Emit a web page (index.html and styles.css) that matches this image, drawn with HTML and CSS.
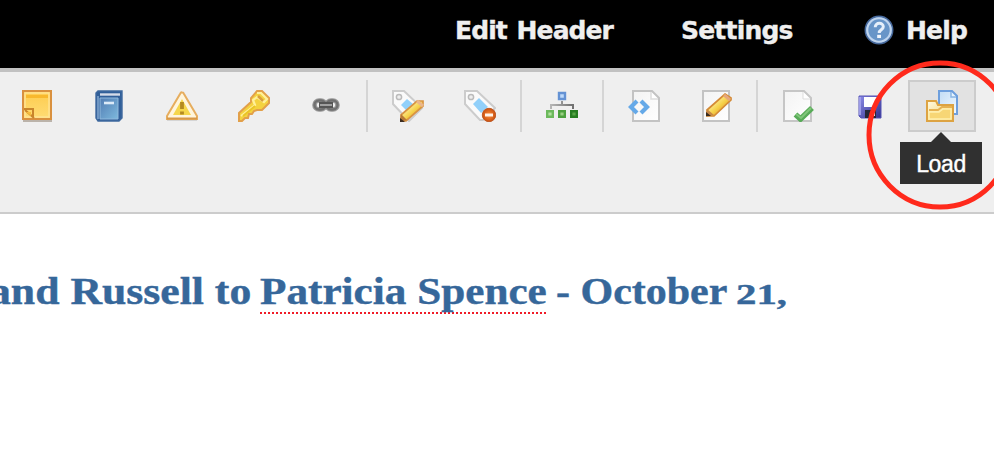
FILE: index.html
```html
<!DOCTYPE html>
<html lang="en">
<head>
<meta charset="utf-8">
<title>Editor</title>
<link rel="stylesheet" href="styles.css">
</head>
<body>
<svg class="defs" width="0" height="0" aria-hidden="true">
  <defs>
    <linearGradient id="gold" x2="0" y2="1"><stop offset="0" stop-color="#fdcb4d"/><stop offset="1" stop-color="#ffdc75"/></linearGradient>
    <linearGradient id="blue" x2="1" y2="1"><stop stop-color="#527cb3"/><stop offset="1" stop-color="#7db9dd"/></linearGradient>
    <linearGradient id="page" x2="1" y2="1"><stop stop-color="#f3f3f3"/><stop offset="1" stop-color="#fff"/></linearGradient>
    <linearGradient id="pencil" x1="0" y1="0" x2="1" y2="1"><stop offset=".25" stop-color="#fff4a5"/><stop offset=".55" stop-color="#f5cf45"/><stop offset=".8" stop-color="#d98a3a"/></linearGradient>
    <linearGradient id="disk" x2="1" y2="1"><stop stop-color="#8c8ce8"/><stop offset="1" stop-color="#302f8c"/></linearGradient>
    <linearGradient id="sheet" x2="1" y2="1"><stop stop-color="#c2dcf5"/><stop offset="1" stop-color="#f2faff"/></linearGradient>
    <linearGradient id="folder" x2="1" y2="1"><stop stop-color="#fffbe5"/><stop offset="1" stop-color="#f3cc58"/></linearGradient>
    <linearGradient id="line" x2="1"><stop stop-color="#b5b5b5"/><stop offset="1" stop-color="#707070"/></linearGradient>
    <radialGradient id="minus"><stop stop-color="#ff8f3d"/><stop offset="1" stop-color="#c9500f"/></radialGradient>
  </defs>
</svg>

<header class="topbar">
  <a class="menu menu-edit">Edit Header</a>
  <a class="menu menu-settings">Settings</a>
  <a class="menu menu-help">
    <svg class="help-icon" viewBox="0 0 28 28"><circle cx="14" cy="14" r="12.7" fill="#6e9bcf" stroke="#47699c" stroke-width="1.6"/><circle cx="14" cy="14" r="11" fill="#6895c8" stroke="#bfd4ee" stroke-width="2"/><path d="M10.5 11.5c0-5 7.5-4.8 7.5-.5 0 3-3.8 2.7-3.8 5.7" fill="none" stroke="#e6effa" stroke-width="2.8"/><rect x="12.3" y="18.5" width="3.6" height="3" fill="#f2f6fc"/></svg>
    <span class="help-label">Help</span>
  </a>
</header>

<nav class="toolbar">
  <button class="tool"><svg viewBox="0 0 32 32"><path d="M1 31h29" stroke="#bbb3aa" stroke-width="2"/><path d="M1 1h28v28H1z" fill="url(#gold)" stroke="#d9903e" stroke-width="2"/><path d="M3 3h24v24H3z" fill="none" stroke="#ffe394" stroke-width="1.4"/><path d="M4 5h22v3H4z" fill="#f8b82d"/><path d="M2 19h9v8M3 20l9 8" fill="none" stroke="#c9852b" stroke-width="2"/><path d="M4 22h5v4z" fill="#f7bd3e"/></svg></button>
  <button class="tool"><svg viewBox="0 0 32 32"><path d="M4 1h24v27l-3 3H4L2 28V3z" fill="#315f99" stroke="#3f699f" stroke-width="1.4"/><path d="M6 4.5h20" stroke="#d5dbe8" stroke-width="2.4"/><path d="M6 8h18v21H6z" fill="url(#blue)" stroke="#91b9dc"/><path d="M4 6v23" stroke="#85a9d1" stroke-width="1.5"/><path d="M10 13h10" stroke="#dceaf8" stroke-width="2.6"/></svg></button>
  <button class="tool"><svg viewBox="0 0 32 32"><path d="M1 30h30" stroke="#ccc" stroke-width="1.5"/><path d="M16 2.5Q17 2 18 4l13 22v3H1v-3L14 4q1-2 2-1.5z" fill="#fff5dc" stroke="#e6ad5e" stroke-width="2"/><path d="M1 28.5h30" stroke="#d89848" stroke-width="2"/><path d="M16 9l9 16H7z" fill="#f5d64b"/><path d="M16 12v7m0 2.5v3" stroke="#b48a22" stroke-width="3.8"/></svg></button>
  <button class="tool"><svg viewBox="0 0 32 32"><path d="M19 1h5l7 7v5l-7 7h-5l-3 1-2 3h-3l-1 4H7l-3 3H1v-8l12-11V8z" fill="#f4d23f" stroke="#e2a04a" stroke-width="2"/><path d="M19 3h4l6 6-3 3-7-5-4 3 2 5L3 26" fill="none" stroke="#fff09b" stroke-width="2.2"/><path d="M20 6l5 5" stroke="#d99f3b" stroke-width="2.5"/><path d="M5 26l12-10" stroke="#eac527" stroke-width="2"/></svg></button>
  <button class="tool"><svg viewBox="0 0 32 32"><g fill="none" stroke="#999" stroke-width="4.6"><rect x="4.5" y="10.5" width="11" height="9" rx="4.5"/><rect x="16.5" y="10.5" width="11" height="9" rx="4.5"/></g><g fill="none" stroke="#707070" stroke-width="2.4"><rect x="4.5" y="10.5" width="11" height="9" rx="4.5"/><rect x="16.5" y="10.5" width="11" height="9" rx="4.5"/></g><path d="M9 15h14" stroke="#555" stroke-width="6"/><path d="M10 15h12" stroke="#aaa" stroke-width="1.8"/></svg></button>
  <span class="sep"></span>
  <button class="tool"><svg viewBox="0 0 32 32"><path d="M1 1h11l18 17-13 13L1 14z" fill="#fafafa" stroke="#ccc" stroke-width="2"/><circle cx="7" cy="7" r="2.6" fill="#eee" stroke="#bbb" stroke-width="1.5"/><path d="M15 9l6 5-7 6-5-5z" fill="#91d0fa"/><path d="M25 11h6v5L14 31H9v-6z" fill="url(#pencil)" stroke="#d89342" stroke-width="1.7"/><path d="M25 11l6 5" stroke="#eab68b" stroke-width="3"/><path d="M9 24l6 6-7 2z" fill="#b87938"/><path d="M8 28v4h5z" fill="#3b2c20"/></svg></button>
  <button class="tool"><svg viewBox="0 0 32 32"><path d="M1 1h12l18 17-12 12h-3L1 14z" fill="#fafafa" stroke="#ccc" stroke-width="2"/><circle cx="7" cy="7" r="2.6" fill="#eee" stroke="#bbb" stroke-width="1.5"/><path d="M15 8l9 9-7 6-8-9z" fill="#91d0fa"/><circle cx="25" cy="25" r="6.7" fill="url(#minus)" stroke="#bd5a27"/><path d="M21 25h8" stroke="#fff3e8" stroke-width="3"/></svg></button>
  <span class="sep"></span>
  <button class="tool"><svg viewBox="0 0 32 32"><path d="M16 11v4M5 19v-4h22v4" fill="none" stroke="url(#line)" stroke-width="2"/><path d="M13 3h6v6h-6z" fill="#bdd9fa" stroke="#6492d4" stroke-width="2.4"/><path d="M1.2 21.2h5.6v5.6H1.2z" fill="#b2e19f" stroke="#6cb95c" stroke-width="2.4"/><path d="M13.2 21.2h5.6v5.6h-5.6z" fill="#9bd083" stroke="#4da03e" stroke-width="2.4"/><path d="M25.2 21.2h5.6v5.6h-5.6z" fill="#57a546" stroke="#267d20" stroke-width="2.4"/></svg></button>
  <span class="sep"></span>
  <button class="tool"><svg viewBox="0 0 32 32"><path d="M5 1h19l7 7v23H5z" fill="url(#page)" stroke="#c3c3c3" stroke-width="2"/><path d="M23 2v7h7" fill="#fff" stroke="#ddd" stroke-width="1.5"/><path d="M9 11l-6 6 6 6M13 11l6 6-6 6" fill="none" stroke="#65a9e8" stroke-width="4.2"/></svg></button>
  <button class="tool"><svg viewBox="0 0 32 32"><path d="M3 1h26v30H3z" fill="url(#page)" stroke="#c3c3c3" stroke-width="2"/><path d="M25 4l6 4v2L14 26H7v-6z" fill="url(#pencil)" stroke="#d48a35" stroke-width="1.7"/><path d="M24 5l6 5" stroke="#e5a77c" stroke-width="3"/><path d="M7 19l7 6-8 2z" fill="#c68845"/><path d="M6 22v4h5z" fill="#382b20"/></svg></button>
  <span class="sep"></span>
  <button class="tool"><svg viewBox="0 0 32 32"><path d="M2 1h20l7 7v23H2z" fill="url(#page)" stroke="#c6c6c6" stroke-width="2"/><path d="M21 2v7h7" fill="#fff" stroke="#ddd"/><path d="M13.5 24.5l5 4.5L30 18" fill="none" stroke="#58ab58" stroke-width="5.6"/><path d="M14 24l5 4L29 18" fill="none" stroke="#80c77a" stroke-width="2"/></svg></button>
  <button class="tool"><svg viewBox="0 0 32 32"><path d="M5 6h22v22H7l-2-2z" fill="url(#disk)" stroke="#5552b5"/><path d="M10 7h13v10H10z" fill="#fff"/><path d="M11 20h11v8H11z" fill="#252637"/><path d="M17 21h4v5h-4z" fill="#e5e5ed"/><path d="M6 7v18" stroke="#aaa9ef" stroke-width="1.6"/></svg></button>
  <div class="tool tool-active">
    <svg viewBox="0 0 32 32"><path d="M13 1h13l5 5v18H13z" fill="url(#sheet)" stroke="#6e9fdd" stroke-width="2"/><path d="M25 2v5h5" fill="#e6f4ff" stroke="#8bb5e4" stroke-width="1.5"/><path d="M1 11h9l2 4h15v16H1z" fill="url(#folder)" stroke="#dda342" stroke-width="2"/><path d="M3 20h9l4-3h10" fill="none" stroke="#e6b353" stroke-width="1.8"/><path d="M3 22h10l4-3h8v10H3z" fill="#f7d675" stroke="#fff0ad" stroke-width="1.5"/></svg>
    <svg class="ring" viewBox="0 0 148 150"><ellipse cx="74" cy="75" rx="71" ry="72" fill="none" stroke="#ff2a1c" stroke-width="5"/></svg>
    <span class="tooltip">Load</span>
  </div>
</nav>

<main class="document">
  <h1 class="title"><span class="part sender"><span class="wide">and Russell to</span></span><span class="part person"><span class="wide">Patricia Spence</span></span><span class="part date"><span class="wide">- October</span></span><span class="part day"><span class="wide">21,</span></span></h1>
</main>
</body>
</html>
```
FILE: styles.css
```css
* { box-sizing: border-box; }
body { margin: 0; width: 994px; height: 456px; overflow: hidden; background: #fff; }
.defs { position: absolute; }

.topbar {
  display: flex;
  height: 68px;
  padding: 14px 0 0 455px;
  background: #000;
  color: #efefef;
  font: bold 25px/34px "DejaVu Sans", sans-serif;
  -webkit-text-stroke: 0.4px #efefef;
}
.menu { display: flex; white-space: nowrap; }
.menu-edit { width: 226px; letter-spacing: -0.92px; word-spacing: 2px; }
.menu-settings { width: 183px; letter-spacing: -0.8px; }
.menu-help { letter-spacing: -0.8px; }
.help-icon { width: 30px; height: 30px; margin-top: 1px; }
.help-label { margin-left: 12px; }

.toolbar {
  display: flex;
  align-items: flex-start;
  gap: 4px;
  height: 146px;
  padding: 8px 0 0 4px;
  background: #efefef;
  border-top: 4px solid #c1c1c1;
  border-bottom: 2px solid #ccc;
}
.tool {
  position: relative;
  display: flex;
  flex: none;
  align-items: center;
  justify-content: center;
  width: 68px;
  height: 52px;
  padding: 0;
  border: 2px solid transparent;
  background: transparent;
}
.tool > svg { width: 32px; height: 32px; }
.tool-active { background: #e2e2e2; border-color: #ccc; }
.sep { flex: none; width: 2px; height: 52px; margin: 0 2px; background: #d5d5d5; }

.tool > .ring {
  position: absolute;
  left: -44px;
  top: -22px;
  width: 148px;
  height: 150px;
}
.tooltip {
  position: absolute;
  left: -10px;
  top: 60px;
  width: 82px;
  height: 42px;
  background: #303030;
  color: #fff;
  font: 23px/44px "Liberation Sans", sans-serif;
  letter-spacing: -0.4px;
  text-align: center;
  -webkit-text-stroke: 0.4px #fff;
}
.tooltip::before {
  content: "";
  position: absolute;
  left: 31px;
  top: -10px;
  border: 10px solid transparent;
  border-top: 0;
  border-bottom-color: #303030;
}

.document { padding-top: 54px; }
.title {
  display: flex;
  margin: 0 0 0 -11px;
  color: #36679a;
  font: bold 38px/46px "Liberation Serif", serif;
  white-space: nowrap;
  -webkit-text-stroke: 0.4px #36679a;
}
.part { flex: none; height: 46px; }
.wide { display: inline-block; transform-origin: left; }
.sender { width: 271px; }
.sender .wide { transform: scaleX(1.15); }
.person {
  width: 287px;
  margin-right: 9px;
  background: repeating-linear-gradient(90deg, #f01c28 0 2px, transparent 2px 4px) 0 44px / 100% 2px no-repeat;
}
.person .wide { transform: scaleX(1.137); }
.date { width: 180px; }
.date .wide { transform: scaleX(1.105); }
.day { font-size: 30px; line-height: 52px; }
.day .wide { transform: scaleX(1.36); }
```
